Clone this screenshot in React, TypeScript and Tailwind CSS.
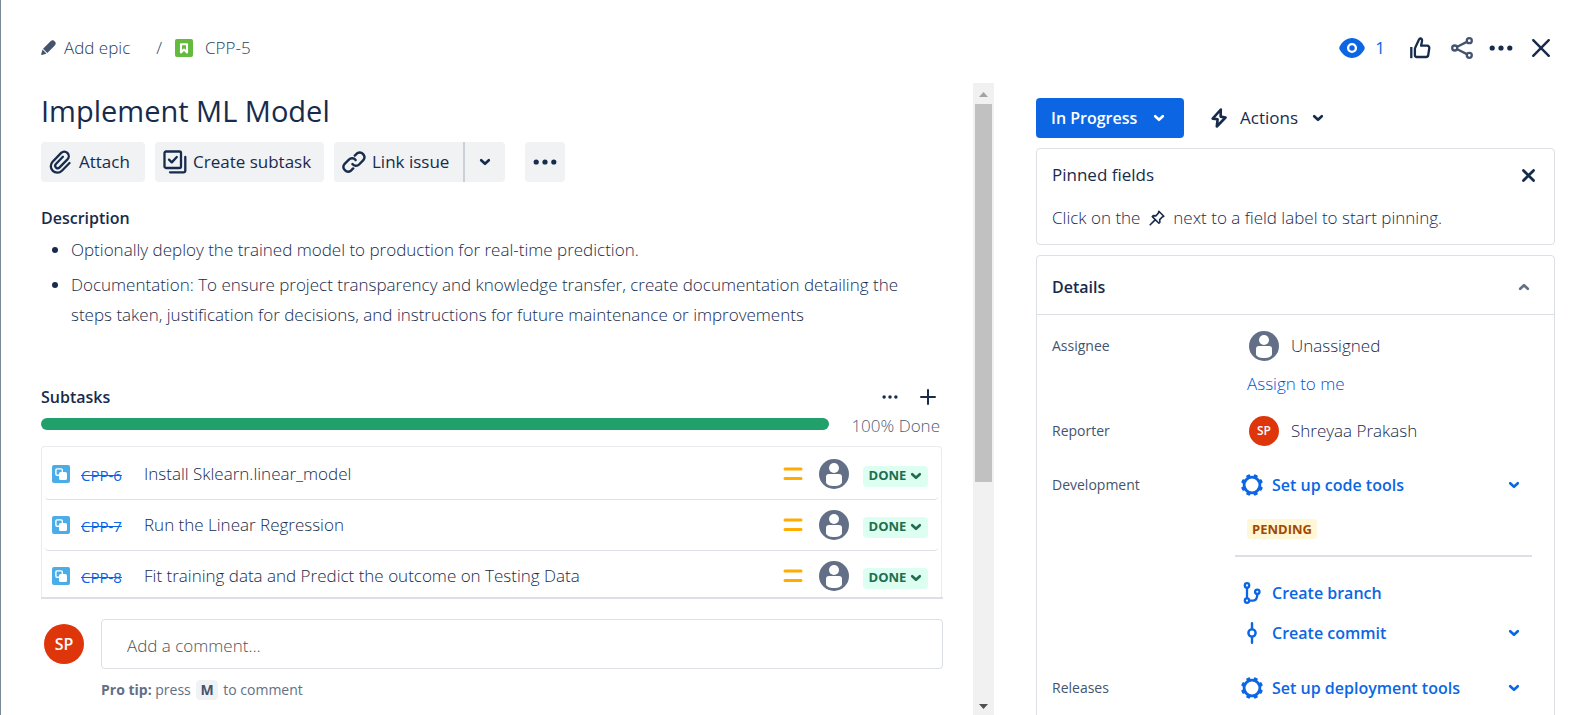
import type { ReactNode, SVGProps } from "react";

type IconProps = SVGProps<SVGSVGElement>;

function Chevron({ up = false, className = "" }: { up?: boolean; className?: string }) {
  return (
    <svg viewBox="0 0 12 8" className={`h-2 w-3 shrink-0 ${className}`} fill="none" stroke="currentColor" strokeWidth="2.6" strokeLinecap="round" strokeLinejoin="round" aria-hidden="true">
      <path d={up ? "M2.200 5.800l3.800-3.600 3.800 3.600" : "M2.200 2.200l3.800 3.600 3.800-3.600"} />
    </svg>
  );
}

function Dots({ className }: { className: string }) {
  return (
    <svg viewBox="0 0 24 6" className={className} fill="currentColor" aria-hidden="true">
      <circle cx="3.2" cy="3" r="2.6" />
      <circle cx="12" cy="3" r="2.6" />
      <circle cx="20.8" cy="3" r="2.6" />
    </svg>
  );
}

function Pencil(props: IconProps) {
  return (
    <svg viewBox="0 0 14 14" fill="currentColor" aria-hidden="true" {...props}>
      <path d="M8.200 1.800l4 4-6.300 6.300-4-4zM8.200 1.800c1.600-1.700 3-1.800 3.900-1.100l1.200 1.200c.8.8.5 2.300-1.100 3.900zM1.400 8.900l3.700 3.700-4 1.300c-.7.2-1.100-.2-.9-.9z" />
    </svg>
  );
}

function Paperclip(props: IconProps) {
  return (
    <svg viewBox="0 0 22 24" fill="none" stroke="currentColor" strokeWidth="2.300" strokeLinecap="round" strokeLinejoin="round" aria-hidden="true" {...props}>
      <path d="M20.500 13l-7.600 7.700a6.400 6.400 0 0 1-9.300-8.900l8.600-8.900a4.500 4.500 0 0 1 6.500 6.200l-8.100 8.300a2.500 2.500 0 0 1-3.700-3.400l7-7.200" />
    </svg>
  );
}

function SubtaskCheck(props: IconProps) {
  return (
    <svg viewBox="0 0 24 24" fill="none" stroke="currentColor" strokeWidth="2.300" strokeLinecap="round" strokeLinejoin="round" aria-hidden="true" {...props}>
      <rect x="1.500" y="1.500" width="16.500" height="16.500" rx="1.500" />
      <path d="M6 9.600l2.800 2.800 5-5.400M22.300 7v13.700a1.600 1.600 0 0 1-1.600 1.600H7" />
    </svg>
  );
}

function LinkIcon(props: IconProps) {
  return (
    <svg viewBox="0 0 24 24" fill="none" stroke="currentColor" strokeWidth="2.400" strokeLinecap="round" strokeLinejoin="round" aria-hidden="true" {...props}>
      <path d="M12.800 5.600l2.300-2.300a4.700 4.700 0 0 1 6.200 6.900l-4.200 4.300a4.500 4.500 0 0 1-6.700-.4M11.200 18.400l-2.300 2.300a4.700 4.700 0 0 1-6.500-6.600l4.500-4.500a4.500 4.500 0 0 1 6.700.4" />
    </svg>
  );
}

function Eye(props: IconProps) {
  return (
    <svg viewBox="0 0 26 20" aria-hidden="true" {...props}>
      <path d="M13 0c5.600 0 9.800 3.600 12.300 8.400.6 1.100.6 2.100 0 3.200C22.800 16.400 18.600 20 13 20S3.200 16.400.700 11.600c-.6-1.100-.6-2.100 0-3.200C3.200 3.600 7.400 0 13 0z" fill="currentColor" />
      <circle cx="13" cy="10" r="3.900" fill="none" stroke="#fff" strokeWidth="2.400" />
    </svg>
  );
}

function Thumb(props: IconProps) {
  return (
    <svg viewBox="0 0 22 22" fill="none" stroke="currentColor" strokeWidth="2.300" strokeLinejoin="round" aria-hidden="true" {...props}>
      <path d="M2.300 10v11.200" />
      <path d="M6.300 10.500l3.600-7.700c.4-1.100 1-1.400 1.700-1.300 1.300.2 1.700 1.300 1.400 2.600l-.9 4.600h6c1.500 0 2.400 1.200 2.200 2.500l-1.100 7c-.2 1.300-1 1.800-2.200 1.800H7.900c-1.200 0-2-.8-2-2v-5.700c0-.7.100-1.200.4-1.800z" />
    </svg>
  );
}

function Share(props: IconProps) {
  return (
    <svg viewBox="0 0 22 22" fill="none" stroke="currentColor" strokeWidth="2.300" aria-hidden="true" {...props}>
      <circle cx="3.700" cy="11" r="2.500" />
      <circle cx="18.300" cy="3.700" r="2.500" />
      <circle cx="18.300" cy="18.300" r="2.500" />
      <path d="M6.200 9.700l9.700-4.800M6.200 12.300l9.700 4.800" />
    </svg>
  );
}

function Cross({ weight, ...props }: IconProps & { weight: number }) {
  return (
    <svg viewBox="0 0 18 18" fill="none" stroke="currentColor" strokeWidth={weight} strokeLinecap="round" aria-hidden="true" {...props}>
      <path d="M2 2l14 14M16 2l-14 14" />
    </svg>
  );
}

function Bolt(props: IconProps) {
  return (
    <svg viewBox="0 0 16 20" fill="none" stroke="currentColor" strokeWidth="2.600" strokeLinejoin="round" aria-hidden="true" {...props}>
      <path d="M9.800 1.500L1.700 10.600l4.900.7-.8 7.200 8.700-9-4.900-.9z" />
    </svg>
  );
}

function Pin(props: IconProps) {
  return (
    <svg viewBox="0 0 16 16" fill="none" stroke="currentColor" strokeWidth="1.600" strokeLinejoin="round" strokeLinecap="round" aria-hidden="true" {...props}>
      <path d="M9.800 1.200l5 5-1.500.8-2.600 2.600.2 2.600-1 1-6.600-6.600 1-1 2.500.3L9.300 3.200zM5.600 10.400l-4.400 4.400" />
    </svg>
  );
}

function Gear(props: IconProps) {
  const teeth = [22.5, 67.5, 112.5, 157.5, 202.5, 247.5, 292.5, 337.5];
  return (
    <svg viewBox="0 0 22 22" fill="currentColor" aria-hidden="true" {...props}>
      <circle cx="11" cy="11" r="7.900" fill="none" stroke="currentColor" strokeWidth="2.800" />
      {teeth.map((angle) => (
        <rect key={angle} x="8.900" y="0" width="4.200" height="4" rx="1.200" transform={`rotate(${angle} 11 11)`} />
      ))}
    </svg>
  );
}

function Branch(props: IconProps) {
  return (
    <svg viewBox="0 0 18 22" fill="none" stroke="currentColor" strokeWidth="2.300" aria-hidden="true" {...props}>
      <circle cx="4" cy="3.400" r="2.200" />
      <circle cx="4" cy="18.600" r="2.200" />
      <circle cx="14.300" cy="9.800" r="2.200" />
      <path d="M4 5.700v10.600M6.300 18.600h3.900c2.600 0 4.100-1.500 4.100-6.500" />
    </svg>
  );
}

function Commit(props: IconProps) {
  return (
    <svg viewBox="0 0 12 22" fill="none" stroke="currentColor" strokeWidth="2.400" strokeLinecap="round" aria-hidden="true" {...props}>
      <circle cx="6" cy="11" r="3.600" />
      <path d="M6 1.200v5.500M6 15.300v5.500" />
    </svg>
  );
}

function PersonAvatar() {
  return (
    <svg viewBox="0 0 30 30" className="size-[30px] shrink-0" role="img" aria-label="Unassigned">
      <circle cx="15" cy="15" r="15" fill="#626f86" />
      <circle cx="15" cy="9" r="5" fill="#fff" />
      <path d="M10 15h10c2 0 3 1 3 3v5c0 2.500-3.500 4-8 4s-8-1.500-8-4v-5c0-2 1-3 3-3z" fill="#fff" />
    </svg>
  );
}

function StoryIcon() {
  return (
    <svg viewBox="0 0 18 18" className="size-[18px] shrink-0" role="img" aria-label="Story">
      <rect width="18" height="18" rx="2" fill="#63ba3c" />
      <path d="M6 5.200h6v8.200L9 10.600l-3 2.800z" fill="none" stroke="#fff" strokeWidth="2.100" strokeLinejoin="round" />
    </svg>
  );
}

function SubtaskIcon() {
  return (
    <svg viewBox="0 0 18 18" className="size-[18px] shrink-0" role="img" aria-label="Sub-task">
      <rect width="18" height="18" rx="2" fill="#4bade8" />
      <rect x="3.900" y="3.900" width="6.400" height="6.400" rx="1.200" fill="none" stroke="#fff" strokeWidth="1.400" />
      <rect x="7" y="7" width="8" height="8" rx="1.600" fill="#fff" />
    </svg>
  );
}

const subtasks = [
  { id: "CPP-6", title: "Install Sklearn.linear_model" },
  { id: "CPP-7", title: "Run the Linear Regression" },
  { id: "CPP-8", title: "Fit training data and Predict the outcome on Testing Data" },
];

function SubtaskRow({ id, title }: { id: string; title: string }) {
  return (
    <li className="mx-[3px] flex h-[51px] items-center rounded-b border-b border-[#dcdfe4] pr-2.5 pl-[7px]">
      <SubtaskIcon />
      <a href="#" className="mt-0.5 ml-[11px] w-[63px] shrink-0 text-[15px] text-[#0c66e4] line-through">
        {id}
      </a>
      <span className="min-w-0 flex-1 text-[17px] leading-6 font-light">{title}</span>
      <svg viewBox="0 0 20 14" className="mr-4 h-3.5 w-5 shrink-0" stroke="#ffab00" strokeWidth="3" strokeLinecap="round" role="img" aria-label="Medium priority">
        <path d="M2 2h16M2 11.500h16" />
      </svg>
      <PersonAvatar />
      <button className="mt-1 ml-3.5 flex h-[21px] w-[65px] shrink-0 items-center justify-center gap-1 rounded bg-[#dcfff1] text-[13px] font-bold text-[#216e4e]">
        DONE
        <Chevron />
      </button>
    </li>
  );
}

function Initials({ className }: { className: string }) {
  return (
    <span className={`flex shrink-0 items-center justify-center rounded-full bg-[#de350b] font-semibold text-white ${className}`}>SP</span>
  );
}

function ToolButton({ icon, children, className = "" }: { icon: ReactNode; children: ReactNode; className?: string }) {
  return (
    <button className={`flex h-10 items-center bg-[#f1f2f4] pl-2 text-[17px] whitespace-nowrap ${className}`}>
      {icon}
      {children}
    </button>
  );
}

function Field({ label, children, className = "" }: { label: string; children: ReactNode; className?: string }) {
  return (
    <div className={`flex ${className}`}>
      <dt className="flex h-8 w-[183px] shrink-0 items-center text-sm text-[#44546f]">{label}</dt>
      <dd className="min-w-0 flex-1">{children}</dd>
    </div>
  );
}

function ToolLink({ icon, children, menu = false }: { icon: ReactNode; children: ReactNode; menu?: boolean }) {
  return (
    <div className="flex h-8 items-center pr-3 pl-[5px] text-[#0c66e4]">
      <a href="#" className="flex flex-1 items-center gap-2 text-base font-semibold">
        <span className="flex w-6 justify-center">{icon}</span>
        {children}
      </a>
      {menu && (
        <button aria-label="More options">
          <Chevron />
        </button>
      )}
    </div>
  );
}

export default function App() {
  return (
    <div className="flex h-screen flex-col overflow-hidden border-l border-[#7a869a] bg-white font-['Open_Sans','Noto_Sans',sans-serif] text-base text-[#172b4d]">
      <header className="flex h-[83px] shrink-0 items-center justify-between pt-3 pr-[27px] pl-10">
        <nav className="flex items-center text-[17px] font-light text-[#2c3e5d]" aria-label="Breadcrumb">
          <a href="#" className="flex items-center gap-2">
            <Pencil className="size-[15px] text-[#44546f]" />
            Add epic
          </a>
          <span className="mr-[13px] ml-[26px]">/</span>
          <a href="#" className="flex items-center gap-3">
            <StoryIcon />
            CPP-5
          </a>
        </nav>
        <div className="flex items-center">
          <button className="flex items-center gap-2.5 text-[17px] text-[#0c66e4]" aria-label="Watchers: 1">
            <Eye className="h-5 w-[26px]" />
            1
          </button>
          <button aria-label="Vote" className="ml-6"><Thumb className="size-[22px]" /></button>
          <button aria-label="Share" className="ml-5 text-[#44546f]"><Share className="size-[22px]" /></button>
          <button aria-label="More actions" className="ml-4"><Dots className="h-1.5 w-6" /></button>
          <button aria-label="Close" className="ml-[18px]"><Cross weight={2.2} className="size-5" /></button>
        </div>
      </header>

      <div className="flex min-h-0 flex-1">
        <main className="flex min-w-0 flex-1 flex-col pl-10">
          <div className="flex min-h-0 flex-1 flex-col overflow-hidden border-b-2 border-[#dcdfe4]">
            <h1 className="mt-2 text-[29px] leading-10 font-medium">Implement ML Model</h1>
            <div className="mt-[11px] flex">
              <ToolButton className="w-[104px] gap-2 rounded" icon={<Paperclip className="h-6 w-[22px]" />}>Attach</ToolButton>
              <ToolButton className="ml-2.5 w-[169px] gap-1.5 rounded" icon={<SubtaskCheck className="size-6" />}>Create subtask</ToolButton>
              <ToolButton className="ml-2.5 w-[129px] gap-1.5 rounded-l" icon={<LinkIcon className="size-6" />}>Link issue</ToolButton>
              <button aria-label="Link options" className="flex h-10 w-[42px] items-center justify-center rounded-r border-l-2 border-[#ccd0d8] bg-[#f1f2f4]">
                <Chevron />
              </button>
              <button aria-label="More" className="ml-5 flex size-10 items-center justify-center rounded bg-[#f1f2f4]">
                <Dots className="h-1.5 w-6" />
              </button>
            </div>

            <h2 className="mt-6 text-base leading-6 font-semibold">Description</h2>
            <ul className="mt-[5px] ml-[30px] list-disc space-y-[5px] text-[17px] leading-[30px] font-light">
              <li>Optionally deploy the trained model to production for real-time prediction.</li>
              <li className="pr-8">
                Documentation: To ensure project transparency and knowledge transfer, create documentation detailing the steps taken, justification for decisions, and instructions for future maintenance or improvements
              </li>
            </ul>

            <div className="mt-[55px] flex h-6 items-center">
              <h2 className="flex-1 text-base font-semibold">Subtasks</h2>
              <button aria-label="Subtask options"><Dots className="h-1 w-4" /></button>
              <button aria-label="Create subtask" className="mr-[7px] ml-[22px]">
                <svg viewBox="0 0 16 16" className="size-4" stroke="currentColor" strokeWidth="2" strokeLinecap="round" aria-hidden="true">
                  <path d="M8 1v14M1 8h14" />
                </svg>
              </button>
            </div>
            <div className="mt-[3px] flex h-6 items-center gap-[22px] pr-[3px]">
              <div className="h-3 flex-1 rounded-full bg-[#22a06b]" />
              <span className="pt-1 text-[17px] leading-5 font-light text-[#4f5c75]">100% Done</span>
            </div>
            <ul className="mt-2.5 mr-px rounded-t border border-b-0 border-[#ebecf0] pt-0.5">
              {subtasks.map((task) => (
                <SubtaskRow key={task.id} {...task} />
              ))}
            </ul>
          </div>

          <div className="mt-5 flex h-24 shrink-0 gap-[17px]">
            <Initials className="mt-[5px] ml-[3px] size-10 text-base" />
            <div className="flex-1">
              <input aria-label="Comment" placeholder="Add a comment…" className="block h-[50px] w-full rounded border border-[#dcdfe4] px-[25px] pt-0.5 text-[17px] font-light placeholder:text-[#525252]" />
              <p className="mt-[11px] text-sm leading-5 text-[#626f86]">
                <b className="font-bold">Pro tip:</b> press <kbd className="mx-0.5 inline-block rounded bg-[#f1f2f4] px-1 font-['Open_Sans','Noto_Sans',sans-serif] font-bold text-[#44546f]">M</kbd> to comment
              </p>
            </div>
          </div>
        </main>

        <div className="mx-[30px] mr-[42px] flex w-[21px] shrink-0 flex-col items-center bg-[#f1f1f1]" aria-hidden="true">
          <svg viewBox="0 0 21 21" className="size-[21px] shrink-0" fill="#a3a3a3"><path d="M6 14l4.500-5 4.500 5z" /></svg>
          <div className="flex min-h-0 w-full flex-1 flex-col px-0.5">
            <div className="h-[64%] bg-[#c1c1c1]" />
          </div>
          <svg viewBox="0 0 21 21" className="size-[21px] shrink-0" fill="#505050"><path d="M6 10l4.500 5 4.500-5z" /></svg>
        </div>

        <aside className="mr-[23px] w-[519px] shrink-0 overflow-hidden pt-[15px]">
          <div className="flex items-center">
            <button className="flex h-10 w-[148px] items-center justify-between rounded bg-[#0c66e4] pr-[19px] pl-[15px] text-base font-semibold text-white">
              In Progress
              <Chevron />
            </button>
            <button className="ml-[27px] flex items-center text-[17px]">
              <Bolt className="mr-[13px] h-5 w-4" />
              Actions
              <Chevron className="ml-3.5" />
            </button>
          </div>

          <section className="mt-2.5 rounded border border-[#dcdfe4] px-[15px] py-3.5">
            <div className="flex h-6 items-center justify-between">
              <h2 className="text-[17px]">Pinned fields</h2>
              <button aria-label="Dismiss" className="mr-1"><Cross weight={3.8} className="size-[13px]" /></button>
            </div>
            <p className="mt-[19px] text-[17px] leading-6 font-light">
              Click on the <Pin className="mx-1 inline size-4 align-[-2px]" /> next to a field label to start pinning.
            </p>
          </section>

          <section className="mt-2.5 rounded border border-[#dcdfe4]">
            <div className="flex h-[59px] items-center justify-between border-b border-[#dcdfe4] pt-1 pr-6 pl-[15px]">
              <h2 className="text-base font-semibold">Details</h2>
              <button aria-label="Collapse details" className="text-[#626f86]"><Chevron up /></button>
            </div>
            <dl className="pr-[22px] pl-[15px]">
              <Field label="Assignee" className="mt-[15px]">
                <div className="flex h-8 items-center gap-3 pl-3.5 text-[17px] font-light">
                  <PersonAvatar />
                  Unassigned
                </div>
                <a href="#" className="mt-2.5 ml-3 block text-[17px] leading-6 font-light text-[#0055d4]">Assign to me</a>
              </Field>
              <Field label="Reporter" className="mt-[19px]">
                <div className="flex h-8 items-center gap-3 pl-3.5 text-[17px] font-light">
                  <Initials className="size-[30px] text-xs" />
                  Shreyaa Prakash
                </div>
              </Field>
              <Field label="Development" className="mt-[22px]">
                <ToolLink icon={<Gear className="size-[22px]" />} menu>Set up code tools</ToolLink>
                <div className="mt-[18px] flex">
                  <span className="ml-3 rounded bg-[#fff7d6] px-[5px] text-[13px] leading-5 font-bold text-[#a54800]">PENDING</span>
                </div>
                <hr className="mt-4 border-t-2 border-[#dcdfe4]" />
                <div className="mt-5 flex flex-col gap-2">
                  <ToolLink icon={<Branch className="h-[22px] w-[18px]" />}>Create branch</ToolLink>
                  <ToolLink icon={<Commit className="h-[22px] w-3" />} menu>Create commit</ToolLink>
                </div>
              </Field>
              <Field label="Releases" className="mt-[23px] pb-5">
                <ToolLink icon={<Gear className="size-[22px]" />} menu>Set up deployment tools</ToolLink>
              </Field>
            </dl>
          </section>
        </aside>
      </div>
    </div>
  );
}
